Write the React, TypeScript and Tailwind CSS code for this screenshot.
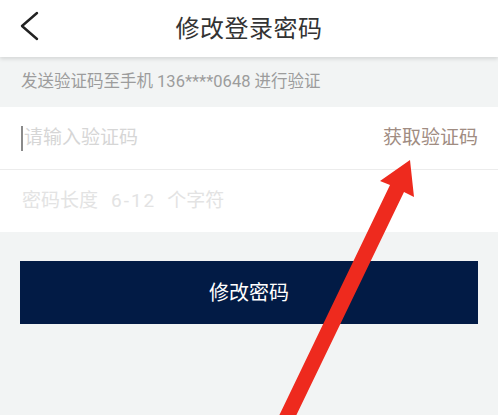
import React from "react";

const font = { fontFamily: 'Roboto, "Noto Sans CJK SC", "Noto Sans", sans-serif' };

const App = () => {
  return (
    <div className="relative w-[498px] h-[415px] overflow-hidden bg-[#f2f4f4]" style={font}>
      {/* header */}
      <div className="relative z-10 flex h-[57px] items-center justify-center bg-white shadow-[0_2px_4px_rgba(0,0,0,0.12)]">
        <svg className="absolute left-[18px] top-[11px]" width="24" height="32" viewBox="0 0 24 32">
          <path d="M19 2 L4 15 L19 28" fill="none" stroke="#222" strokeWidth="2.4" strokeLinecap="round" strokeLinejoin="round" />
        </svg>
        <h1 className="text-[24px] leading-none text-[#333] tracking-[0.5px]">修改登录密码</h1>
      </div>

      {/* hint band */}
      <div className="flex h-[50px] items-center px-[21px] text-[16.5px] text-[#9c9c9c]">
        发送验证码至手机 136****0648 进行验证
      </div>

      {/* inputs */}
      <div className="bg-white">
        <div className="flex h-[63px] items-center justify-between border-b border-[#ececec] pl-[21px] pr-[20px]">
          <div className="flex items-center">
            <span className="mr-[1px] h-[25px] w-[2px] bg-[#8a8a8a]" />
            <span className="text-[19px] text-[#d6d6d6]">请输入验证码</span>
          </div>
          <span className="text-[19px] text-[#a08c82]">获取验证码</span>
        </div>
        <div className="flex h-[62px] items-center px-[22px] text-[19px] text-[#e3e3e3]">
          <span>密码长度</span>
          <span className="ml-[13px] tracking-[2px]">6-12</span>
          <span className="ml-[11px]">个字符</span>
        </div>
      </div>

      {/* button */}
      <div className="px-[20px] pt-[29px]">
        <button className="flex h-[63px] w-full items-center justify-center bg-[#021b45] text-[20px] text-white">
          修改密码
        </button>
      </div>

      {/* red arrow overlay */}
      <svg className="pointer-events-none absolute left-0 top-0" width="498" height="415" viewBox="0 0 498 415">
        <polygon
          points="410,160 414,197 404,192 294,420 277,420 390,185 380,181"
          fill="#ee2a1e"
        />
      </svg>
    </div>
  );
};

export default App;
